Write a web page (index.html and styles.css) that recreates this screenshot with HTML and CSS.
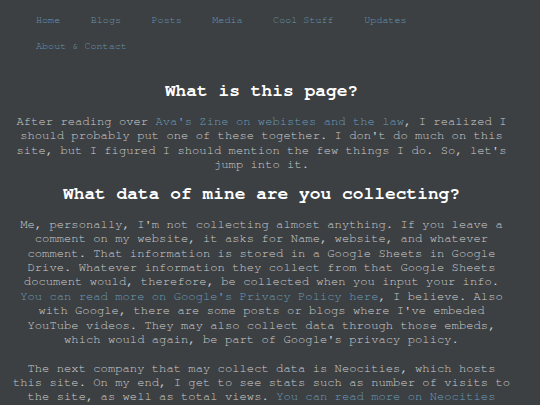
FILE: index.html
```html
<!DOCTYPE html>
<html lang="en">
<head>
<meta charset="utf-8">
<title>Privacy</title>
<link rel="stylesheet" href="styles.css">
</head>
<body>
<nav class="nav">
  <a href="#">Home</a>
  <a href="#">Blogs</a>
  <a href="#">Posts</a>
  <a href="#">Media</a>
  <a href="#">Cool Stuff</a>
  <a href="#">Updates</a>
  <a href="#">About &amp; Contact</a>
</nav>
<main class="content">
  <h1 class="title">What is this page?</h1>
  <p class="text">After reading over <a class="link" href="#">Ava's Zine on webistes and the law</a>, I realized I should probably put one of these together. I don't do much on this site, but I figured I should mention the few things I do. So, let's jump into it.</p>
  <h2 class="title">What data of mine are you collecting?</h2>
  <p class="text">Me, personally, I'm not collecting almost anything. If you leave a comment on my website, it asks for Name, website, and whatever comment. That information is stored in a Google Sheets in Google Drive. Whatever information they collect from that Google Sheets document would, therefore, be collected when you input your info. <a class="link" href="#">You can read more on Google's Privacy Policy here</a>, I believe. Also with Google, there are some posts or blogs where I've embeded YouTube videos. They may also collect data through those embeds, which would again, be part of Google's privacy policy.</p>
  <p class="text">The next company that may collect data is Neocities, which hosts this site. On my end, I get to see stats such as number of visits to the site, as well as total views. <a class="link" href="#">You can read more on Neocities privacy policy here</a>.</p>
</main>
</body>
</html>
```

FILE: styles.css
```css
html, body {
  margin: 0;
  padding: 0;
  background: #3c4043;
}
body {
  font-family: "FreeMono", "Nimbus Mono PS", "Nimbus Mono L", "Courier New", "Liberation Mono", monospace;
  color: #cdcdcd;
}
.nav {
  display: flex;
  flex-wrap: wrap;
  column-gap: 30.5px;
  row-gap: 12px;
  padding: 13px 40px 0 36px;
  font-size: 10.1px;
  line-height: 14px;
}
.nav a {
  color: #6795b0;
  text-decoration: none;
}
.content {
  padding: 0 27px 0 10px;
  text-align: center;
}
.title {
  margin: 0;
  font-size: 17.9px;
  line-height: 20px;
  font-weight: bold;
  color: #ffffff;
}
h1.title {
  margin-top: 27.7px;
}
h2.title {
  margin-top: 12.5px;
}
.text {
  margin: 13px 0 0;
  font-size: 12.2px;
  line-height: 14.4px;
}
.text + .text {
  margin-top: 14.2px;
}
.link {
  color: #6b9bb8;
  text-decoration: none;
}
```
